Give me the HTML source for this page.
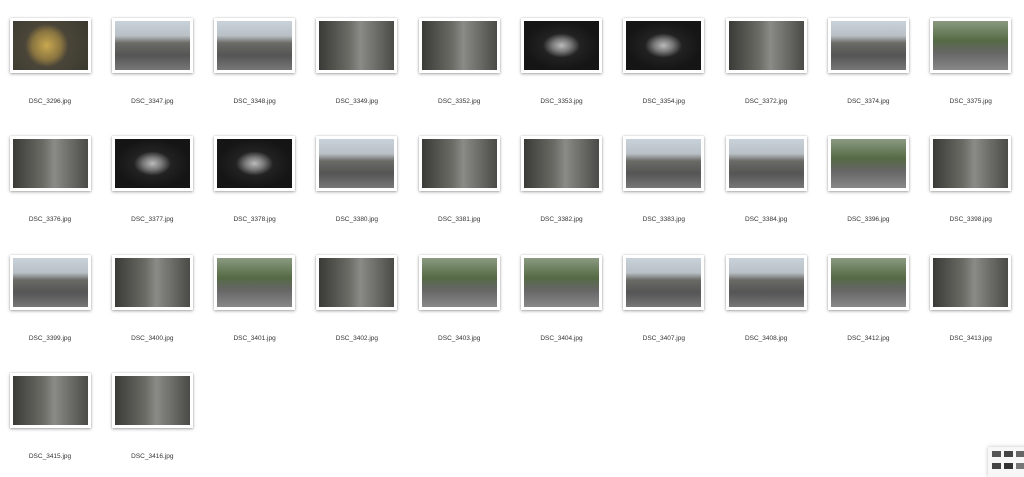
<!DOCTYPE html><html><head><style>
body{margin:0;width:1024px;height:470px;background:#fff;overflow:hidden;position:relative;font-family:"Liberation Sans",sans-serif}
.f{position:absolute;width:81px;height:55px;background:#fff;box-shadow:0 1px 3px rgba(0,0,0,.35),0 0 1px rgba(0,0,0,.2)}
.f i{position:absolute;left:3px;top:3px;width:75px;height:49px;display:block}
.l{position:absolute;width:100px;text-align:center;font-size:6.5px;color:#333}
.t{background:radial-gradient(ellipse at 50% 50%,#bbb 0,#777 18%,#222 35%,#151515 70%)}
.s{background:linear-gradient(#c9d2da 0,#b9c0c6 30%,#6a6a66 45%,#555 70%,#777)}
.a{background:linear-gradient(90deg,#3a3a36,#6b6b66 40%,#8a8a86 55%,#4a4a46)}
.g{background:linear-gradient(#8a9a80,#556a45 40%,#666 65%,#888)}
.m{background:radial-gradient(circle at 45% 50%,#c9a850 0,#8a7540 30%,#4a4538 45%,#3a3a30)}
</style></head><body>
<div id="c"></div>
<script>
const rows=[
[["3296","m"],["3347","s"],["3348","s"],["3349","a"],["3352","a"],["3353","t"],["3354","t"],["3372","a"],["3374","s"],["3375","g"]],
[["3376","a"],["3377","t"],["3378","t"],["3380","s"],["3381","a"],["3382","a"],["3383","s"],["3384","s"],["3396","g"],["3398","a"]],
[["3399","s"],["3400","a"],["3401","g"],["3402","a"],["3403","g"],["3404","g"],["3407","s"],["3408","s"],["3412","g"],["3413","a"]],
[["3415","a"],["3416","a"]]];
let h="";
rows.forEach((r,ri)=>r.forEach((it,ci)=>{
 const cx=50+ci*102.3, y=18+ri*118.3;
 h+=`<div class="f" style="left:${(cx-40.5).toFixed(1)}px;top:${y.toFixed(1)}px"><i class="${it[1]}"></i></div>`;
 h+=`<div class="l" style="left:${(cx-50).toFixed(1)}px;top:${(y+80).toFixed(1)}px">DSC_${it[0]}.jpg</div>`;
}));
document.getElementById("c").innerHTML=h;
</script>
<div style="position:absolute;left:988px;top:447px;width:40px;height:30px;background:#f7f7f7;box-shadow:0 0 4px rgba(0,0,0,.25)">
<div style="position:absolute;left:4px;top:4px;width:9px;height:6px;background:#555"></div>
<div style="position:absolute;left:16px;top:4px;width:9px;height:6px;background:#444"></div>
<div style="position:absolute;left:28px;top:4px;width:9px;height:6px;background:#666"></div>
<div style="position:absolute;left:4px;top:16px;width:9px;height:6px;background:#444"></div>
<div style="position:absolute;left:16px;top:16px;width:9px;height:6px;background:#333"></div>
<div style="position:absolute;left:28px;top:16px;width:9px;height:6px;background:#777"></div>
</div>
</body></html>
